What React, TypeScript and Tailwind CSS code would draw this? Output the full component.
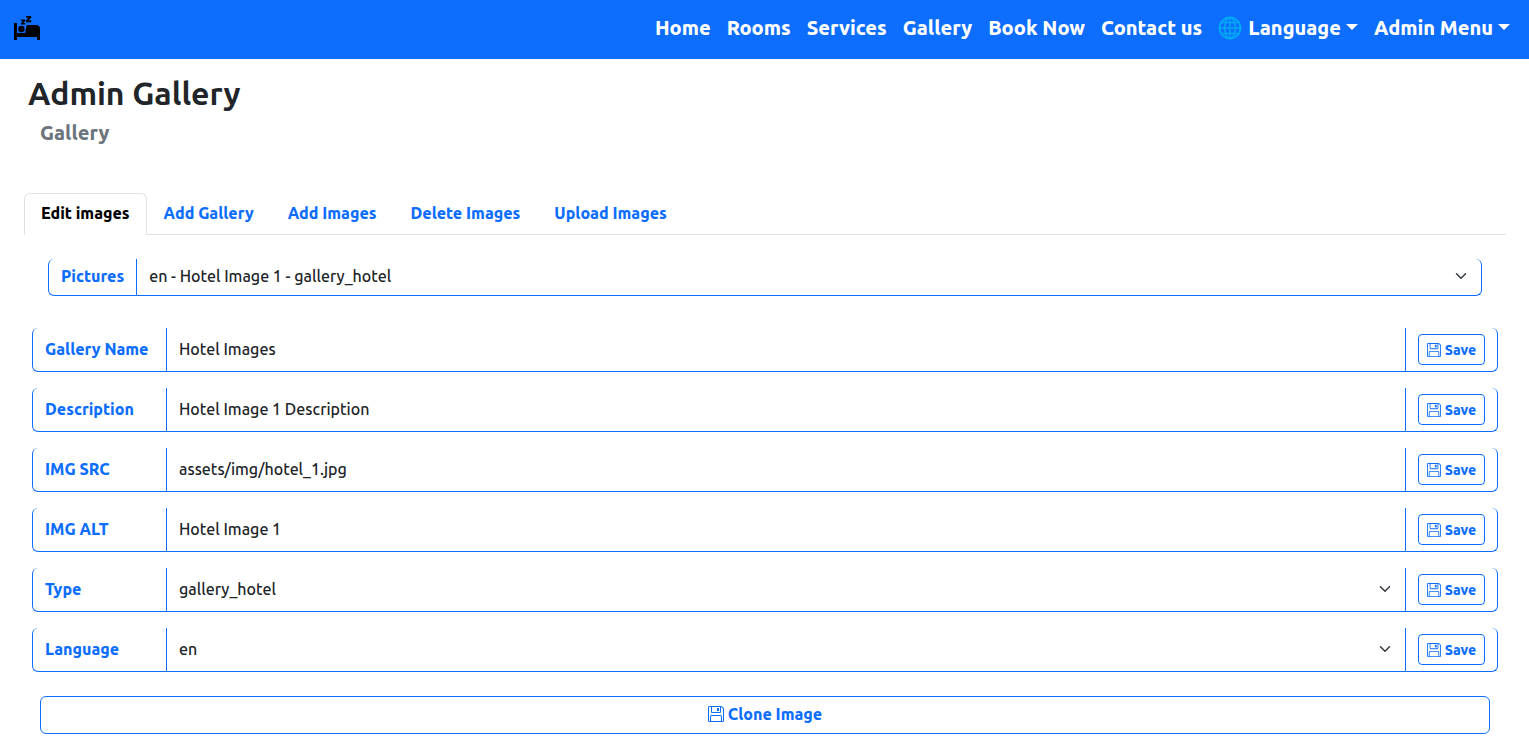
import { BsFloppy } from "react-icons/bs";

const navLinks = ["Home", "Rooms", "Services", "Gallery", "Book Now", "Contact us"];
const tabs = ["Edit images", "Add Gallery", "Add Images", "Delete Images", "Upload Images"];

type Field = { id: string; label: string; value: string; options?: string[] };

const fields: Field[] = [
  { id: "gallery-name", label: "Gallery Name", value: "Hotel Images" },
  { id: "description", label: "Description", value: "Hotel Image 1 Description" },
  { id: "img-src", label: "IMG SRC", value: "assets/img/hotel_1.jpg" },
  { id: "img-alt", label: "IMG ALT", value: "Hotel Image 1" },
  { id: "type", label: "Type", value: "gallery_hotel", options: ["gallery_hotel"] },
  { id: "language", label: "Language", value: "en", options: ["en"] },
];

function BedLogo() {
  return (
    <svg viewBox="0 0 26 24" className="h-6 w-[26px]" aria-hidden="true">
      <path d="M0 7h3v10h8.200l1.300-7.200q.15-.8.9-.8H22q4 0 4 4v11h-3v-3H3v3H0z" fill="#000" />
      <circle cx="7.400" cy="13" r="3.200" fill="#000" />
      <path d="M7.200 3.600h3.900v1.500L9.400 7h1.800v1.500H7V7l1.800-1.900H7.200zM12.200 0h5v1.800l-2.600 2.500h2.700v1.900h-5.400V4.500l2.600-2.700h-2.300z" fill="#000" />
    </svg>
  );
}

function Globe() {
  return (
    <svg viewBox="0 0 24 24" className="size-6" fill="none" stroke="#03a9f4" strokeWidth="1.400" aria-hidden="true">
      <circle cx="12" cy="12" r="10.500" strokeWidth="1.800" />
      <ellipse cx="12" cy="12" rx="5.300" ry="10.500" />
      <path d="M12 1.500v21M1.500 12h21M3.500 6.500h17M3.500 17.500h17" />
    </svg>
  );
}

function Caret() {
  return <span className="mb-[2px] ml-[5px] border-x-6 border-t-6 border-x-transparent border-t-white" aria-hidden="true" />;
}

function SelectBox({ id, options }: { id: string; options: string[] }) {
  return (
    <div className="grid min-w-0 flex-1 grid-cols-1 items-center">
      <select id={id} className="col-start-1 row-start-1 h-full w-full appearance-none bg-transparent px-3 pb-[2px] outline-none">
        {options.map((option) => (
          <option key={option}>{option}</option>
        ))}
      </select>
      <svg
        viewBox="0 0 16 16"
        className="pointer-events-none col-start-1 row-start-1 mr-[14px] mb-[2px] size-3 justify-self-end"
        fill="none"
        stroke="#343a40"
        strokeWidth="2"
        strokeLinecap="round"
        strokeLinejoin="round"
        aria-hidden="true"
      >
        <path d="m2 5 6 6 6-6" />
      </svg>
    </div>
  );
}

export default function App() {
  return (
    <div className="bg-white pb-5 font-['Ubuntu','Noto_Sans',sans-serif] text-base font-medium text-[#212529]">
      <nav className="flex min-h-[59px] items-center justify-between bg-[#0d6efd] pr-[19px] pb-[3px] pl-[14px] text-white">
        <a href="#" aria-label="Hotel home">
          <BedLogo />
        </a>
        <div className="flex items-center gap-4 text-[20px] leading-[30px] font-extrabold whitespace-nowrap">
          {navLinks.map((link) => (
            <a key={link} href="#">{link}</a>
          ))}
          <button type="button" className="flex items-center">
            <Globe />
            <span className="ml-[6px]">Language</span>
            <Caret />
          </button>
          <button type="button" className="flex items-center">
            Admin Menu
            <Caret />
          </button>
        </div>
      </nav>

      <main className="pt-[15px] pr-[23px] pl-6">
        <h1 className="px-1 text-[32px] leading-[38px] font-semibold">Admin Gallery</h1>
        <h2 className="mt-[9px] px-4 text-[20px] leading-6 font-extrabold text-[#6c757d]">Gallery</h2>

        <div className="mt-12 flex border-b border-[#dee2e6] font-extrabold" role="tablist">
          {tabs.map((tab, index) => (
            <button
              key={tab}
              type="button"
              role="tab"
              aria-selected={index === 0}
              className={
                index === 0
                  ? "-mb-px rounded-t-md border border-[#dee2e6] border-b-white bg-white px-4 pt-[7px] pb-[9px] leading-6 text-black"
                  : "-mb-px border border-transparent px-4 pt-[7px] pb-[9px] leading-6 text-[#0d6efd]"
              }
            >
              {tab}
            </button>
          ))}
        </div>

        <div className="mx-6 mt-6 flex h-[37px] rounded-md border border-t-0 border-[#0d6efd]">
          <label htmlFor="pictures" className="flex items-center border-r border-[#0d6efd] px-3 pb-[2px] font-extrabold text-[#0d6efd]">
            Pictures
          </label>
          <SelectBox id="pictures" options={["en - Hotel Image 1 - gallery_hotel"]} />
        </div>

        <form className="mx-2 mt-8 flex flex-col gap-4" onSubmit={(event) => event.preventDefault()}>
          {fields.map((field) => (
            <div key={field.id} className="flex h-11 rounded-md border border-t-0 border-[#0d6efd]">
              <label
                htmlFor={field.id}
                className="flex w-[134px] items-center border-r border-[#0d6efd] px-3 pb-[2px] font-extrabold text-[#0d6efd]"
              >
                {field.label}
              </label>
              {field.options ? (
                <SelectBox id={field.id} options={field.options} />
              ) : (
                <input id={field.id} type="text" defaultValue={field.value} className="min-w-0 flex-1 px-3 pb-[2px] outline-none" />
              )}
              <div className="flex items-center border-l border-[#0d6efd] px-3">
                <button
                  type="button"
                  className="flex h-[31px] w-[67px] items-center justify-center gap-1 rounded border border-[#0d6efd] text-sm font-extrabold text-[#0d6efd]"
                >
                  <BsFloppy className="size-[14px]" aria-hidden="true" />
                  Save
                </button>
              </div>
            </div>
          ))}
          <button
            type="button"
            className="mx-2 mt-2 flex h-[38px] items-center justify-center gap-1 rounded-md border border-[#0d6efd] pb-[2px] font-extrabold text-[#0d6efd]"
          >
            <BsFloppy className="size-4" aria-hidden="true" />
            Clone Image
          </button>
        </form>
      </main>
    </div>
  );
}
